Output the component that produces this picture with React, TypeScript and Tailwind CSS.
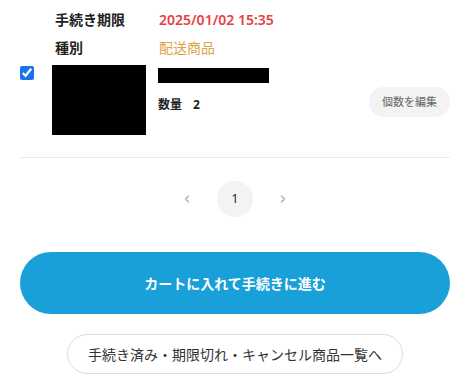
import { ChevronLeft, ChevronRight } from 'lucide-react';

export default function App() {
  return (
    <div className="w-[470px] bg-white text-[#222] font-['Noto_Sans','Noto_Sans_CJK_JP',sans-serif]">
      <div className="px-5">
        <div className="flex flex-col gap-[6px] pt-[8px] pl-[35px]">
          <div className="flex items-center h-[22px]">
            <span className="w-[104px] text-[14px] font-bold">手続き期限</span>
            <span className="text-[14px] font-semibold text-[#e8403f]">2025/01/02 15:35</span>
          </div>
          <div className="flex items-center h-[22px]">
            <span className="w-[104px] text-[14px] font-bold">種別</span>
            <span className="text-[14px] text-[#dba442]">配送商品</span>
          </div>
        </div>

        <div className="flex mt-[7px] pb-[22px] border-b border-[#ebebeb]">
          <input type="checkbox" defaultChecked className="w-[14px] h-[14px] mt-[1px] accent-[#1a73e8]" />
          <div className="w-[94px] h-[70px] bg-black ml-[18px]" />
          <div className="flex-1 ml-[12px] pt-[3px]">
            <div className="w-[111px] h-[15px] bg-black" />
            <div className="flex items-center justify-between mt-[4px]">
              <span className="text-[12px] font-bold mt-[5px]">数量<span className="ml-[11px]">2</span></span>
              <button className="h-[30px] px-[13px] rounded-full bg-[#f3f3f3] text-[11px] text-[#666]">個数を編集</button>
            </div>
          </div>
        </div>

        <div className="flex items-center justify-center gap-[24px] mt-[23px]">
          <ChevronLeft size={12} className="text-[#aaa]" strokeWidth={2.5} />
          <div className="w-[36px] h-[36px] rounded-full bg-[#f3f3f3] flex items-center justify-center text-[12px]">1</div>
          <ChevronRight size={12} className="text-[#aaa]" strokeWidth={2.5} />
        </div>

        <button className="w-full h-[62px] mt-[35px] rounded-full bg-[#19a0d8] text-white text-[14px] font-bold">カートに入れて手続きに進む</button>

        <div className="flex justify-center mt-[20px]">
          <button className="h-[40px] w-[336px] rounded-full border border-[#dcdcdc] text-[14px] text-[#333]">手続き済み・期限切れ・キャンセル商品一覧へ</button>
        </div>
      </div>
    </div>
  );
}
